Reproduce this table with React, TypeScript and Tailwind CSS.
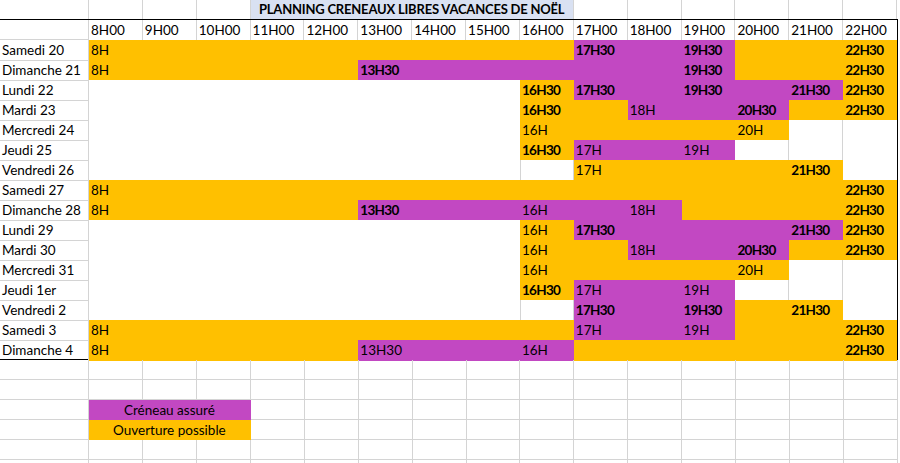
import type { ReactNode } from "react";

type Fill = "o" | "p" | "w" | "n";

interface DayRow {
  day: string;
  cells: string;
  labels: Record<number, string>;
}

const HOURS = [
  "8H00",
  "9H00",
  "10H00",
  "11H00",
  "12H00",
  "13H00",
  "14H00",
  "15H00",
  "16H00",
  "17H00",
  "18H00",
  "19H00",
  "20H00",
  "21H00",
  "22H00",
];

// o = ouverture possible, p = créneau assuré, w = blanc rempli, n = sans remplissage
// "*" devant un libellé = gras
const ROWS: DayRow[] = [
  { day: "Samedi 20", cells: "ooooooooopppooo", labels: { 0: "8H", 9: "*17H30", 11: "*19H30", 14: "*22H30" } },
  { day: "Dimanche 21", cells: "ooooopppppppooo", labels: { 0: "8H", 5: "*13H30", 11: "*19H30", 14: "*22H30" } },
  { day: "Lundi 22", cells: "wwwwwwwwopppppo", labels: { 8: "*16H30", 9: "*17H30", 11: "*19H30", 13: "*21H30", 14: "*22H30" } },
  { day: "Mardi 23", cells: "wwwwwwwwoopppoo", labels: { 8: "*16H30", 10: "18H", 12: "*20H30", 14: "*22H30" } },
  { day: "Mercredi 24", cells: "wwwwwwwwooooonn", labels: { 8: "16H", 12: "20H" } },
  { day: "Jeudi 25", cells: "wwwwwwwwopppnnn", labels: { 8: "*16H30", 9: "17H", 11: "19H" } },
  { day: "Vendredi 26", cells: "wwwwwwwwnooooon", labels: { 9: "17H", 13: "*21H30" } },
  { day: "Samedi 27", cells: "ooooooooooooooo", labels: { 0: "8H", 14: "*22H30" } },
  { day: "Dimanche 28", cells: "oooooppppppoooo", labels: { 0: "8H", 5: "*13H30", 8: "16H", 10: "18H", 14: "*22H30" } },
  { day: "Lundi 29", cells: "wwwwwwwwopppppo", labels: { 8: "16H", 9: "*17H30", 13: "*21H30", 14: "*22H30" } },
  { day: "Mardi 30", cells: "wwwwwwwwoopppoo", labels: { 8: "16H", 10: "18H", 12: "*20H30", 14: "*22H30" } },
  { day: "Mercredi 31", cells: "wwwwwwwwooooonn", labels: { 8: "16H", 12: "20H" } },
  { day: "Jeudi 1er", cells: "wwwwwwwwopppnnn", labels: { 8: "*16H30", 9: "17H", 11: "19H" } },
  { day: "Vendredi 2", cells: "wwwwwwwwnpppoon", labels: { 9: "*17H30", 11: "*19H30", 13: "*21H30" } },
  { day: "Samedi 3", cells: "ooooooooopppooo", labels: { 0: "8H", 9: "17H", 11: "19H", 14: "*22H30" } },
  { day: "Dimanche 4", cells: "oooooppppoooooo", labels: { 0: "8H", 5: "13H30", 8: "16H", 14: "*22H30" } },
];

const GRID = "grid grid-cols-[89px_repeat(15,minmax(0,1fr))]";

function fillClass(f: Fill) {
  if (f === "o") return "bg-[#FFC000]";
  if (f === "p") return "bg-[#C248C2]";
  return "bg-white";
}

function Label({ text }: { text?: string }) {
  if (!text) return null;
  const bold = text.startsWith("*");
  return (
    <span className={bold ? "font-bold tracking-[-0.7px]" : ""}>
      {bold ? text.slice(1) : text}
    </span>
  );
}

function DataRow({ row, next, last }: { row: DayRow; next?: DayRow; last: boolean }) {
  const fills = row.cells.split("") as Fill[];
  return (
    <div className={`${GRID} ${last ? "h-[19px]" : "h-[20px]"}`}>
      <div
        className={`border-r border-[#d4d4d4] pl-[2px] whitespace-nowrap ${
          last ? "" : "border-b"
        }`}
      >
        {row.day}
      </div>
      {fills.map((f, i) => {
        const below = next ? (next.cells[i] as Fill) : undefined;
        const gridR = f === "n" && i < 14;
        const gridB = f === "n" && !last && (below === "n" || below === undefined);
        const gridL = f === "n" && i > 0 && fills[i - 1] === "w";
        return (
          <div
            key={i}
            className={`${fillClass(f)} pl-[2px] whitespace-nowrap border-r border-b ${
              gridR ? "border-r-[#d4d4d4]" : "border-r-transparent"
            } ${gridB ? "border-b-[#d4d4d4]" : "border-b-transparent"} ${
              gridL ? "shadow-[inset_1px_0_0_#d4d4d4]" : ""
            }`}
          >
            <Label text={row.labels[i]} />
          </div>
        );
      })}
    </div>
  );
}

function EmptyRow({ children }: { children?: ReactNode }) {
  return (
    <div className="grid h-[20px] w-[898px] grid-cols-[89px_repeat(15,minmax(0,1fr))] border-b border-[#d4d4d4]">
      {children ??
        Array.from({ length: 16 }).map((_, i) => (
          <div key={i} className="border-r border-[#d4d4d4]" />
        ))}
    </div>
  );
}

export default function App() {
  return (
    <div className="h-[463px] w-[900px] overflow-hidden bg-white font-['Lato',sans-serif] text-[13.5px] leading-[20px] text-black">
      {/* Ligne du titre, au-dessus du tableau */}
      <div className={`${GRID} h-[19px] w-[897px] leading-[19px]`}>
        {Array.from({ length: 4 }).map((_, i) => (
          <div key={i} className="border-r border-[#d4d4d4]" />
        ))}
        <div className="col-span-6 border-r border-[#d4d4d4] bg-[#D9E1F2] text-center text-[13px] font-bold tracking-[-0.2px] whitespace-nowrap">
          PLANNING CRENEAUX LIBRES VACANCES DE NOËL
        </div>
        {Array.from({ length: 6 }).map((_, i) => (
          <div key={i} className="border-r border-[#d4d4d4]" />
        ))}
      </div>

      {/* Tableau principal */}
      <div className="w-[898px] border-t border-r border-b border-black">
        <div className={`${GRID} h-[20px]`}>
          <div className="border-r border-b border-[#d4d4d4]" />
          {HOURS.map((h, i) => (
            <div
              key={h}
              className={`pl-[2px] whitespace-nowrap ${
                i < 14 ? "border-r border-[#d4d4d4]" : ""
              }`}
            >
              {h}
            </div>
          ))}
        </div>
        {ROWS.map((row, i) => (
          <DataRow
            key={row.day}
            row={row}
            next={ROWS[i + 1]}
            last={i === ROWS.length - 1}
          />
        ))}
      </div>

      {/* Légende */}
      <EmptyRow />
      <EmptyRow />
      <EmptyRow>
        <div className="border-r border-[#d4d4d4]" />
        <div className="col-span-3 border-r border-b border-transparent bg-[#C248C2] text-center">
          Créneau assuré
        </div>
        {Array.from({ length: 12 }).map((_, i) => (
          <div key={i} className="border-r border-[#d4d4d4]" />
        ))}
      </EmptyRow>
      <EmptyRow>
        <div className="border-r border-[#d4d4d4]" />
        <div className="col-span-3 border-r border-transparent bg-[#FFC000] text-center">
          Ouverture possible
        </div>
        {Array.from({ length: 12 }).map((_, i) => (
          <div key={i} className="border-r border-[#d4d4d4]" />
        ))}
      </EmptyRow>
      <EmptyRow />
      <EmptyRow />
    </div>
  );
}
